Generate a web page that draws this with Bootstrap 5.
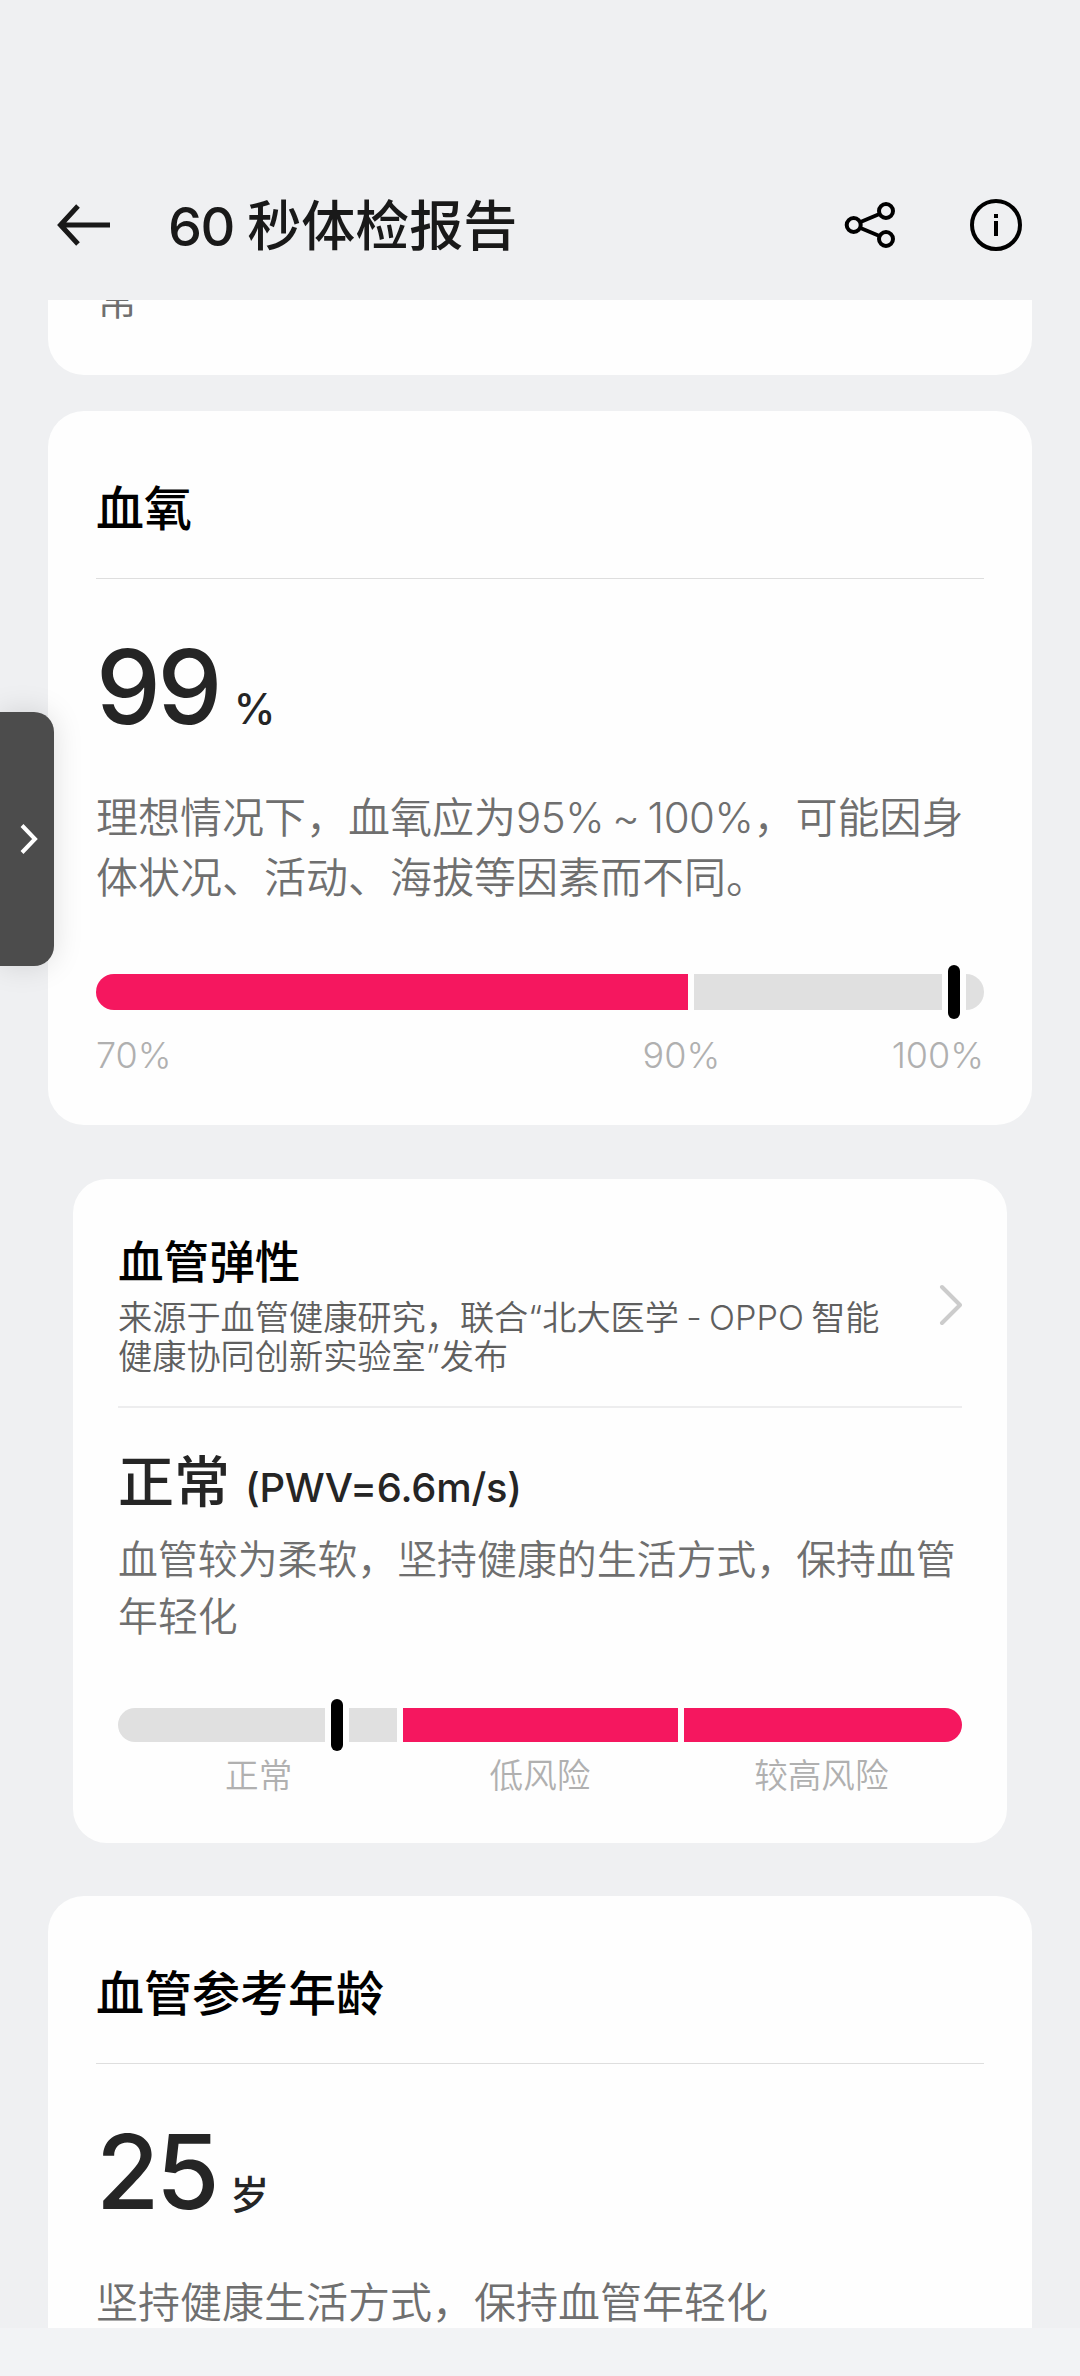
<!DOCTYPE html>
<html lang="zh-CN">
<head>
<meta charset="utf-8">
<meta name="viewport" content="width=device-width, initial-scale=1">
<title>60 秒体检报告</title>
<link rel="stylesheet" href="https://cdn.jsdelivr.net/npm/bootstrap@5.3.0/dist/css/bootstrap.min.css">
<style>
  html, body { height: 2376px; overflow: hidden; }
  body { background: #eff0f2; color: #000; font-family: Inter, "Noto Sans CJK SC", sans-serif; }
  .topbar { height: 300px; padding: 150px 50px 0 56px; }
  .topbar-title { font-size: 54px; font-weight: 500; line-height: 80px; color: #191919; margin-left: 56px; padding-top: 4px; word-spacing: -1px; }
  .topbar-num { letter-spacing: -1.5px; }
  .icon-gap { gap: 72px; }
  .feed { height: 2028px; padding: 0 48px; }
  .panel { background: #fefefe; border: 0; border-radius: 36px; padding: 62px 48px 46px; flex: none; }
  .panel-prev { height: 75px; border-radius: 0 0 36px 36px; padding: 0 48px; margin-bottom: 36px; overflow: hidden; }
  .panel-prev .desc { margin-top: -30px; }
  .panel-title { font-size: 48px; font-weight: 500; line-height: 72px; padding-bottom: 33px; border-bottom: 1px solid #dedede; }
  .figure-row { margin-top: 48px; height: 121px; color: #252525; font-weight: 500; line-height: 120px; }
  .figure-num { font-size: 103px; letter-spacing: -3.5px; }
  .figure-unit { font-size: 42px; margin-left: 15px; }
  .figure-unit.cjk { font-size: 39px; margin-left: 14px; }
  .desc { font-size: 42px; font-weight: 350; line-height: 60px; color: #6f6f6f; margin-top: 40px; white-space: nowrap; }
  .desc-range { letter-spacing: -.5px; word-spacing: -3px; }
  .gauge { height: 54px; margin-top: 57px; gap: 6px; }
  .seg { height: 36px; background: #e0e0e0; }
  .seg.hot { background: #f5175f; }
  .seg.cap-l { border-radius: 18px 0 0 18px; }
  .seg.cap-r { border-radius: 0 18px 18px 0; }
  .pin { width: 12px; height: 54px; border-radius: 6px; background: #000; }
  .scale { font-size: 36px; font-weight: 350; line-height: 48px; color: #b0b0b0; margin-top: 12px; }
  .scale-mid { margin-left: 471px; }

  .panel-inset { margin: 53.5px 25px; padding: 57.5px 45px 43px; height: 664px; border-radius: 34px; }
  .inset-head { padding-bottom: 30.5px; border-bottom: 2px solid #ededee; }
  .inset-title { font-size: 45.6px; font-weight: 500; line-height: 54px; }
  .inset-sub { font-size: 34.2px; font-weight: 350; line-height: 39px; color: #5f5f5f; margin-top: 7.5px; white-space: nowrap; word-spacing: -2.3px; }
  .inset-value { font-size: 56px; font-weight: 500; line-height: 72px; color: #252525; margin-top: 38px; height: 73px; }
  .inset-value span { font-size: 39.9px; letter-spacing: -.2px; }
  .panel-inset .desc { font-size: 39.9px; line-height: 57px; margin-top: 12px; }
  .panel-inset .gauge { height: 52px; margin-top: 53.5px; }
  .panel-inset .seg { height: 34px; }
  .panel-inset .pin { height: 52px; }
  .panel-inset .scale { font-size: 33.6px; margin-top: 1px; }
  .footbar { height: 48px; background: #f2f3f5; }
  .side-tab { left: 0; top: 712px; width: 54px; height: 254px; background: #4c4c4c; border-radius: 0 20px 20px 0; box-shadow: 0 0 30px rgba(0,0,0,.13); padding-left: 18px; }
</style>
</head>
<body>
<header class="topbar d-flex align-items-center">
  <svg width="56" height="48" viewBox="0 0 56 48" fill="none" stroke="#191919" stroke-width="5"><path d="M22 5 4.500 24 22 43M4.500 24H54" /></svg>
  <h1 class="topbar-title mb-0"><span class="topbar-num">60</span> 秒体检报告</h1>
  <div class="icon-gap ms-auto d-flex align-items-center">
    <svg width="54" height="54" viewBox="0 0 54 54" fill="none" stroke="#000" stroke-width="4"><circle cx="9.700" cy="27" r="7"/><circle cx="42" cy="13" r="7"/><circle cx="42" cy="41" r="7"/><path d="M16.500 24 35.500 16M16.500 30 35.500 38"/></svg>
    <svg width="60" height="54" viewBox="0 0 60 54"><circle cx="26" cy="27" r="24" fill="none" stroke="#000" stroke-width="4"/><path d="M24 16h4v4h-4zM24 23h4v15h-4z"/></svg>
  </div>
</header>

<main class="feed d-flex flex-column overflow-hidden">
  <section class="card panel panel-prev"><p class="desc mb-0">常</p></section>

  <section class="card panel">
    <h2 class="panel-title mb-0">血氧</h2>
    <div class="figure-row d-flex align-items-baseline"><span class="figure-num">99</span><span class="figure-unit">%</span></div>
    <p class="desc mb-0">理想情况下，血氧应为<span class="desc-range">95% ~ 100%</span>，可能因身<br>体状况、活动、海拔等因素而不同。</p>
    <div class="gauge d-flex align-items-center">
      <div class="seg hot cap-l" style="width:592px"></div>
      <div class="seg" style="width:248px"></div>
      <div class="pin"></div>
      <div class="seg cap-r flex-fill"></div>
    </div>
    <div class="scale d-flex"><span>70%</span><span class="scale-mid">90%</span><span class="ms-auto">100%</span></div>
  </section>

  <section class="card panel panel-inset">
    <div class="inset-head d-flex justify-content-between align-items-center">
      <div>
        <h2 class="inset-title mb-0">血管弹性</h2>
        <p class="inset-sub mb-0">来源于血管健康研究，联合“北大医学 - OPPO 智能<br>健康协同创新实验室”发布</p>
      </div>
      <svg width="26" height="44" viewBox="0 0 26 44" fill="none" stroke="#ccc" stroke-width="4" stroke-linecap="round" stroke-linejoin="round"><path d="M6 3 24 21 6 39"/></svg>
    </div>
    <div class="inset-value">正常 <span>(PWV=6.6m/s)</span></div>
    <p class="desc mb-0">血管较为柔软，坚持健康的生活方式，保持血管<br>年轻化</p>
    <div class="gauge d-flex align-items-center">
      <div class="seg cap-l" style="width:207px"></div>
      <div class="pin"></div>
      <div class="seg" style="width:48px"></div>
      <div class="seg hot" style="width:275px"></div>
      <div class="seg hot cap-r flex-fill"></div>
    </div>
    <div class="scale row g-0 text-center"><span class="col-4">正常</span><span class="col-4">低风险</span><span class="col-4">较高风险</span></div>
  </section>

  <section class="card panel">
    <h2 class="panel-title mb-0">血管参考年龄</h2>
    <div class="figure-row d-flex align-items-baseline"><span class="figure-num">25</span><span class="figure-unit cjk">岁</span></div>
    <p class="desc mb-0">坚持健康生活方式，保持血管年轻化</p>
  </section>
</main>
<footer class="footbar"></footer>

<div class="side-tab position-absolute d-flex align-items-center">
  <svg width="22" height="34" viewBox="0 0 22 34" fill="none" stroke="#fff" stroke-width="4"><path d="M4 3.500 17 17 4 30.500"/></svg>
</div>
<script src="https://cdn.jsdelivr.net/npm/bootstrap@5.3.0/dist/js/bootstrap.bundle.min.js"></script>
</body>
</html>
